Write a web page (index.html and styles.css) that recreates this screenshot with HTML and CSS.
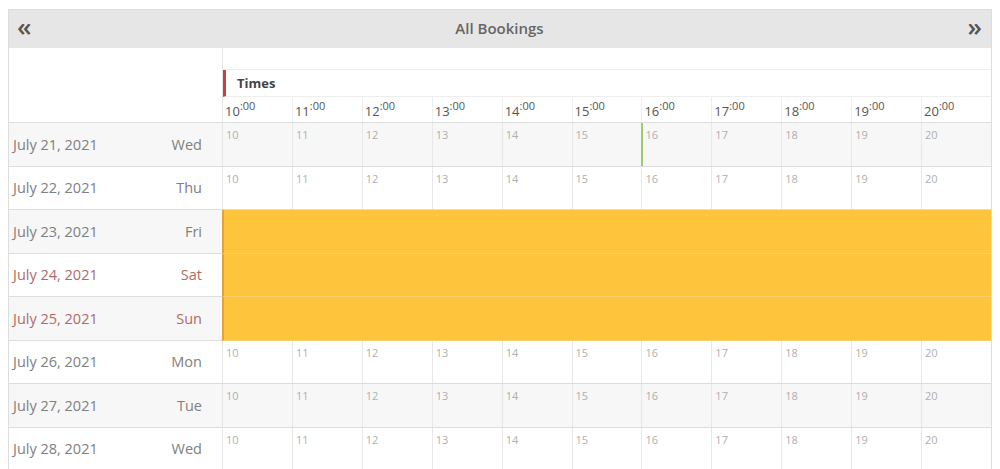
FILE: index.html
```html
<!DOCTYPE html>
<html>
<head>
  <title>All Bookings</title>
  <link rel="stylesheet" href="styles.css">
</head>
<body>
  <div class="calendar">
    <div class="cal-header">
      <span class="nav">&laquo;</span>
      <span class="title">All Bookings</span>
      <span class="nav">&raquo;</span>
    </div>

    <div class="cal-head">
      <div class="head-left"></div>
      <div class="head-right">
        <div class="head-spacer"></div>
        <div class="head-label">Times</div>
        <div class="hours">
          <div class="hour">10<sup>:00</sup></div>
          <div class="hour">11<sup>:00</sup></div>
          <div class="hour">12<sup>:00</sup></div>
          <div class="hour">13<sup>:00</sup></div>
          <div class="hour">14<sup>:00</sup></div>
          <div class="hour">15<sup>:00</sup></div>
          <div class="hour">16<sup>:00</sup></div>
          <div class="hour">17<sup>:00</sup></div>
          <div class="hour">18<sup>:00</sup></div>
          <div class="hour">19<sup>:00</sup></div>
          <div class="hour">20<sup>:00</sup></div>
        </div>
      </div>
    </div>

    <div class="day-row odd">
      <div class="day-label"><span>July 21, 2021</span><span>Wed</span></div>
      <div class="slots">
        <div class="slot">10</div><div class="slot">11</div><div class="slot">12</div><div class="slot">13</div>
        <div class="slot">14</div><div class="slot">15</div><div class="slot">16</div><div class="slot">17</div>
        <div class="slot">18</div><div class="slot">19</div><div class="slot">20</div>
        <div class="now"></div>
      </div>
    </div>

    <div class="day-row">
      <div class="day-label"><span>July 22, 2021</span><span>Thu</span></div>
      <div class="slots">
        <div class="slot">10</div><div class="slot">11</div><div class="slot">12</div><div class="slot">13</div>
        <div class="slot">14</div><div class="slot">15</div><div class="slot">16</div><div class="slot">17</div>
        <div class="slot">18</div><div class="slot">19</div><div class="slot">20</div>
      </div>
    </div>

    <div class="day-row odd">
      <div class="day-label"><span>July 23, 2021</span><span>Fri</span></div>
      <div class="slots booked"></div>
    </div>

    <div class="day-row weekend">
      <div class="day-label"><span>July 24, 2021</span><span>Sat</span></div>
      <div class="slots booked"></div>
    </div>

    <div class="day-row odd weekend">
      <div class="day-label"><span>July 25, 2021</span><span>Sun</span></div>
      <div class="slots booked"></div>
    </div>

    <div class="day-row">
      <div class="day-label"><span>July 26, 2021</span><span>Mon</span></div>
      <div class="slots">
        <div class="slot">10</div><div class="slot">11</div><div class="slot">12</div><div class="slot">13</div>
        <div class="slot">14</div><div class="slot">15</div><div class="slot">16</div><div class="slot">17</div>
        <div class="slot">18</div><div class="slot">19</div><div class="slot">20</div>
      </div>
    </div>

    <div class="day-row odd">
      <div class="day-label"><span>July 27, 2021</span><span>Tue</span></div>
      <div class="slots">
        <div class="slot">10</div><div class="slot">11</div><div class="slot">12</div><div class="slot">13</div>
        <div class="slot">14</div><div class="slot">15</div><div class="slot">16</div><div class="slot">17</div>
        <div class="slot">18</div><div class="slot">19</div><div class="slot">20</div>
      </div>
    </div>

    <div class="day-row">
      <div class="day-label"><span>July 28, 2021</span><span>Wed</span></div>
      <div class="slots">
        <div class="slot">10</div><div class="slot">11</div><div class="slot">12</div><div class="slot">13</div>
        <div class="slot">14</div><div class="slot">15</div><div class="slot">16</div><div class="slot">17</div>
        <div class="slot">18</div><div class="slot">19</div><div class="slot">20</div>
      </div>
    </div>
  </div>
</body>
</html>
```

FILE: styles.css
```css
/* booking calendar */
body {
  margin: 9px 8px 0;
  font-family: "Open Sans", Arial, sans-serif;
  color: #666;
  background: #fff;
}
.calendar {
  border-left: 1px solid #ddd;
  border-right: 1px solid #ddd;
}
.cal-header {
  display: flex;
  align-items: center;
  justify-content: space-between;
  height: 38px;
  padding: 0 9px 0 8px;
  background-color: #e6e6e6;
  border-top: 1px solid #dcdcdc;
}
.cal-header .nav {
  font-size: 26px;
  line-height: 1;
  font-weight: 600;
  color: #555;
  margin-top: -6px;
}
.cal-header .title {
  font-size: 15px;
  font-weight: 600;
  color: #666;
  margin-top: -2px;
}
.cal-head {
  display: flex;
  border-bottom: 1px solid #ddd;
}
.head-left {
  width: 213px;
}
.head-right {
  flex: 1;
  border-left: 1px solid #e6e6e6;
}
.head-spacer {
  height: 21px;
  border-bottom: 1px solid #eee;
}
.head-label {
  height: 26px;
  line-height: 26px;
  border-left: 3px solid #c9403a;
  border-bottom: 1px solid #eee;
  padding-left: 11px;
  font-size: 13px;
  font-weight: 700;
  color: #444;
}
.hours {
  display: flex;
  height: 25px;
}
.hour {
  flex: 1;
  border-left: 1px solid #eee;
  padding: 1px 0 0 2px;
  font-size: 13px;
  color: #555;
}
.hour:first-child {
  border-left: none;
}
.hour sup {
  font-size: 11px;
  vertical-align: 6px;
}
.day-row {
  display: flex;
  height: 43.5px;
  box-sizing: border-box;
  border-bottom: 1px solid #ddd;
}
.day-row.odd {
  background-color: #f7f7f7;
}
.day-label {
  width: 213px;
  display: flex;
  align-items: center;
  justify-content: space-between;
  padding: 0 20px 0 4px;
  box-sizing: border-box;
  font-size: 14.5px;
  color: #808080;
}
.weekend .day-label {
  color: #b06b67;
}
.slots {
  flex: 1;
  display: flex;
  position: relative;
  border-left: 1px solid #e6e6e6;
}
.slot {
  flex: 1;
  border-left: 1px solid #e8e8e8;
  padding: 4px 0 0 3px;
  font-size: 11px;
  color: #afafaf;
}
.slot:first-child {
  border-left: none;
}
.slots.booked {
  background-color: #fec43c;
  border-left: 2px solid #e6a33c;
  margin-bottom: -1px;
  border-bottom: 1px solid #f8cf6a;
}
.now {
  position: absolute;
  left: 418px;
  top: 0;
  bottom: 0;
  width: 2px;
  background-color: #9ccc65;
}
```
